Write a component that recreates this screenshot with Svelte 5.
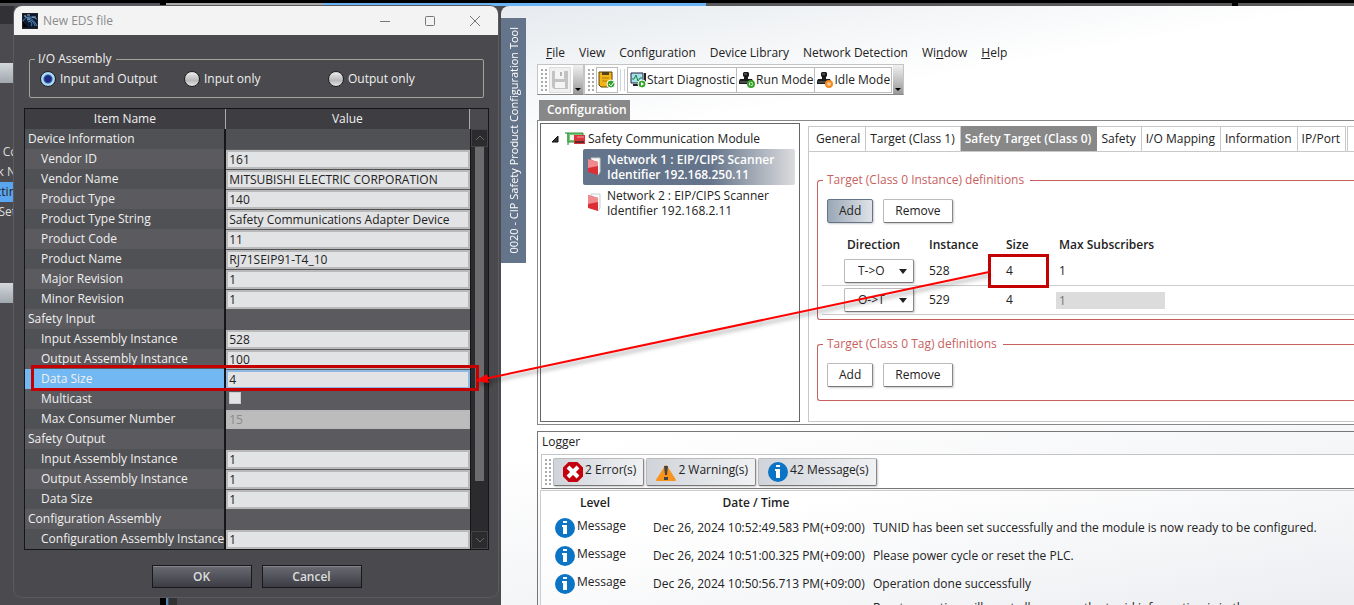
<script>
  // parameters shown in the EDS dialog
  const rows = [
    { name: 'Device Information', group: true },
    { name: 'Vendor ID', value: '161' },
    { name: 'Vendor Name', value: 'MITSUBISHI ELECTRIC CORPORATION' },
    { name: 'Product Type', value: '140' },
    { name: 'Product Type String', value: 'Safety Communications Adapter Device' },
    { name: 'Product Code', value: '11' },
    { name: 'Product Name', value: 'RJ71SEIP91-T4_10' },
    { name: 'Major Revision', value: '1' },
    { name: 'Minor Revision', value: '1' },
    { name: 'Safety Input', group: true },
    { name: 'Input Assembly Instance', value: '528' },
    { name: 'Output Assembly Instance', value: '100' },
    { name: 'Data Size', value: '4', selected: true },
    { name: 'Multicast', check: true },
    { name: 'Max Consumer Number', value: '15', disabled: true },
    { name: 'Safety Output', group: true },
    { name: 'Input Assembly Instance', value: '1' },
    { name: 'Output Assembly Instance', value: '1' },
    { name: 'Data Size', value: '1' },
    { name: 'Configuration Assembly', group: true },
    { name: 'Configuration Assembly Instance', value: '1' }
  ];

  const menus = ['File', 'View', 'Configuration', 'Device Library', 'Network Detection', 'Window', 'Help'];
  const tabs = ['General', 'Target (Class 1)', 'Safety Target (Class 0)', 'Safety', 'I/O Mapping', 'Information', 'IP/Port'];
  const networks = [
    { name: 'Network 1 : EIP/CIPS Scanner', id: 'Identifier 192.168.250.11' },
    { name: 'Network 2 : EIP/CIPS Scanner', id: 'Identifier 192.168.2.11' }
  ];
  const logs = [
    { time: 'Dec 26, 2024 10:52:49.583 PM(+09:00)', text: 'TUNID has been set successfully and the module is now ready to be configured.' },
    { time: 'Dec 26, 2024 10:51:00.325 PM(+09:00)', text: 'Please power cycle or reset the PLC.' },
    { time: 'Dec 26, 2024 10:50:56.713 PM(+09:00)', text: 'Operation done successfully' }
  ];

  let assembly = $state('both');
  let activeTab = $state('Safety Target (Class 0)');
  let activeNetwork = $state(0);
</script>

{#snippet infoIcon()}
  <svg class="levelIcon" viewBox="0 0 20 20" aria-hidden="true">
    <circle cx="10" cy="10" r="10" fill="#0b74c4" />
    <path d="M8 3h4v2H8zM7 7h5v9H8V9H7z" fill="#fff" />
  </svg>
{/snippet}

{#snippet stamp(idle)}
  <svg width="18" height="18" viewBox="0 0 18 18" aria-hidden="true">
    <path d="M5 2l1-1h4l1 1v3l-1 1v2h4l1 2v3H1v-3l1-2h4V6L5 5z" fill="#1c1c1c" />
    <path d="M2 11h12M6 3h3" stroke="#777" />
    <circle cx="13" cy="13" r="3" fill="#fff" stroke={idle ? '#f58a1f' : '#36a32b'} stroke-width="2" />
    {#if idle}
      <path d="M12 11v4M14 11v4" stroke="#f58a1f" />
    {:else}
      <path d="M12 11l3 2-3 2z" fill="#36a32b" />
    {/if}
  </svg>
{/snippet}

<div class="desktop">
  <div class="behindTop"><span class="grayPart"></span><span class="bluePart"></span><span class="darkPart"></span><span class="endPart"></span></div>
  <div class="behindLeft" aria-hidden="true">
    <span class="bar"></span>
    <div class="peek">
      <span>Cc</span>
      <span>k N</span>
      <span class="hit">ctin</span>
      <span>Set</span>
    </div>
    <span class="bar"></span>
  </div>
  <div class="behindBottom"></div>

  <section class="dialog" aria-label="New EDS file">
    <header class="titleBar">
      <svg width="16" height="16" viewBox="0 0 16 16" aria-hidden="true">
        <rect x=".5" y=".5" width="15" height="15" fill="#0c1830" stroke="#222" />
        <path d="M1 8c3-5 8-5 14-2M3 4c5 0 9 3 12 9M6 9c3-2 5 2 3 4M5 7c4-1 7 2 8 6" fill="none" stroke="#4f8fc4" />
        <path d="M2 3h2M5 2h3M10 4h4M5 6h3" stroke="#a8bccb" />
        <path d="M1 9l5 5H1z" fill="#000" />
      </svg>
      <h1>New EDS file</h1>
      <button aria-label="Minimize"><svg width="12" height="12" viewBox="0 0 12 12"><path d="M1 6.5h10" /></svg></button>
      <button aria-label="Maximize"><svg width="12" height="12" viewBox="0 0 12 12"><rect x="1.5" y="1.5" width="9" height="9" rx="1" /></svg></button>
      <button aria-label="Close"><svg width="12" height="12" viewBox="0 0 12 12"><path d="M1 1l10 10M11 1L1 11" /></svg></button>
    </header>

    <div class="dialogBody">
      <fieldset class="assembly">
        <legend>I/O Assembly</legend>
        <label><input type="radio" bind:group={assembly} value="both" />Input and Output</label>
        <label><input type="radio" bind:group={assembly} value="in" />Input only</label>
        <label><input type="radio" bind:group={assembly} value="out" />Output only</label>
      </fieldset>

      <div class="gridBox">
        <table class="params">
          <thead>
            <tr><th class="nameCol">Item Name</th><th>Value</th></tr>
          </thead>
          <tbody>
            {#each rows as row, i}
              <tr class:selected={row.selected}>
                <td class:group={row.group}><label for="param{i}">{row.name}</label></td>
                <td class="value">
                  {#if row.check}
                    <input type="checkbox" id="param{i}" />
                  {:else if !row.group}
                    <input type="text" id="param{i}" value={row.value} disabled={row.disabled} />
                  {/if}
                </td>
              </tr>
            {/each}
          </tbody>
        </table>
        <div class="scroll">
          <button aria-label="Scroll up"><svg width="10" height="6" viewBox="0 0 10 6"><path d="M1 5l4-4 4 4" /></svg></button>
          <div class="track"><div class="thumb"></div></div>
          <button aria-label="Scroll down"><svg width="10" height="6" viewBox="0 0 10 6"><path d="M1 1l4 4 4-4" /></svg></button>
        </div>
      </div>

      <div class="actions">
        <button>OK</button>
        <button>Cancel</button>
      </div>
    </div>
  </section>

  <main class="tool">
    <div class="sideTitle"><span>0020 - CIP Safety Product Configuration Tool</span></div>

    <div class="work">
      <nav class="menu">
        {#each menus as item}
          {#if item === 'Window'}
            <button>Wi<u>n</u>dow</button>
          {:else if item === 'File' || item === 'Help'}
            <button><u>{item[0]}</u>{item.slice(1)}</button>
          {:else}
            <button>{item}</button>
          {/if}
        {/each}
      </nav>

      <div class="toolbars">
        <div class="toolbar">
          <span class="grip"></span>
          <button class="save" aria-label="Save" disabled>
            <svg width="18" height="20" viewBox="0 0 18 20"><path d="M1 1h16v18H3l-2-2z" fill="#c3c3c3" /><path d="M4 1h9v8H4zM4 12h10v6H4z" fill="#f4f4f4" /><path d="M9 2h2v4H9z" fill="#b5b5b5" /></svg>
          </button>
          <button class="more" aria-label="More file tools"></button>
        </div>
        <div class="toolbar">
          <span class="grip"></span>
          <button class="tile" aria-label="Verify">
            <svg width="18" height="18" viewBox="0 0 18 18">
              <path d="M1 1h13v15H3l-2-2z" fill="#f2b41b" stroke="#5b4300" />
              <path d="M4 1h7v3H4z" fill="#54441c" />
              <path d="M4 7h7M4 10h5" stroke="#b07a00" />
              <circle cx="13" cy="13" r="4" fill="#36a32b" stroke="#fff" />
              <path d="M11 13l2 2 3-4" fill="none" stroke="#fff" />
            </svg>
          </button>
          <span class="sep"></span>
          <button class="toolBtn">
            <svg width="18" height="18" viewBox="0 0 18 18" aria-hidden="true">
              <path d="M2 2h12v10H2z" fill="#a6e0ee" stroke="#223" />
              <path d="M16 2v12H4" fill="none" stroke="#223" stroke-width="2" />
              <path d="M3 8h2l2-4 2 6 2-3h2" fill="none" stroke="#158533" />
              <circle cx="13" cy="13" r="4" fill="#36a32b" stroke="#fff" />
              <path d="M12 11l3 2-3 2z" fill="#fff" />
            </svg>Start Diagnostic</button>
          <button class="toolBtn">{@render stamp(false)}Run Mode</button>
          <button class="toolBtn">{@render stamp(true)}Idle Mode</button>
          <button class="more last" aria-label="More tools"></button>
        </div>
      </div>

      <h2 class="paneTab">Configuration</h2>
      <div class="config">
        <div class="tree">
          <div class="root">
            <svg width="8" height="8" viewBox="0 0 8 8" aria-hidden="true"><path d="M7 1v6H1z" fill="#333" stroke="#111" /></svg>
            <svg width="20" height="14" viewBox="0 0 20 14" aria-hidden="true">
              <path d="M0 1h3v12" stroke="#158533" fill="none" />
              <path d="M3 1h15v9H3z" fill="#7cc676" stroke="#2f8f35" />
              <path d="M5 3h5v5H5z" fill="#eef5ee" />
              <path d="M9 3h11v9H9z" fill="#d9333b" />
              <path d="M10 9h9v2h-9z" fill="#5c2a2d" />
              <path d="M12 5h7" stroke="#f2a5a8" />
            </svg>
            Safety Communication Module
          </div>
          {#each networks as net, i}
            <button class="node" class:active={activeNetwork === i} onclick={() => (activeNetwork = i)}>
              <svg width="14" height="20" viewBox="0 0 14 20" aria-hidden="true">
                <path d="M4 1h9v14l-2 3z" fill="#fafafa" stroke="#ccc" />
                <path d="M1 2l10 3v13L1 15z" fill="#dc2f35" />
                <path d="M1 2l10 3v4L1 11z" fill="#ef8b8e" />
              </svg>
              <span>{net.name}<br />{net.id}</span>
            </button>
          {/each}
        </div>

        <div class="detail">
          <div class="tabs">
            {#each tabs as tab}
              <button class:active={activeTab === tab} onclick={() => (activeTab = tab)}>{tab}</button>
            {/each}
            <span class="nextTab"></span>
          </div>
          <div class="tabBody">
            <fieldset class="defs">
              <legend>Target (Class 0 Instance) definitions</legend>
              <div class="btns"><button class="focused">Add</button><button>Remove</button></div>
              <table class="instances">
                <thead>
                  <tr><th class="dir">Direction</th><th class="inst">Instance</th><th class="size">Size</th><th>Max Subscribers</th></tr>
                </thead>
                <tbody>
                  <tr>
                    <td class="dir"><span class="pick"><select aria-label="Direction of instance 528"><option>T-&gt;O</option><option>O-&gt;T</option></select><i></i></span></td>
                    <td>528</td><td>4</td><td>1</td>
                  </tr>
                  <tr>
                    <td class="dir"><span class="pick"><select aria-label="Direction of instance 529"><option>O-&gt;T</option><option>T-&gt;O</option></select><i></i></span></td>
                    <td>529</td><td>4</td><td class="sub"><input type="text" value="1" disabled aria-label="Max Subscribers of instance 529" /></td>
                  </tr>
                </tbody>
              </table>
            </fieldset>
            <fieldset class="defs tags">
              <legend>Target (Class 0 Tag) definitions</legend>
              <div class="btns"><button>Add</button><button>Remove</button></div>
            </fieldset>
          </div>
        </div>
      </div>

      <section class="logger">
        <h2>Logger</h2>
        <div class="filters">
          <span class="grip"></span>
          <button>
            <svg class="levelIcon" viewBox="0 0 20 20" aria-hidden="true"><path d="M6 1h8l5 5v8l-5 5H6l-5-5V6z" fill="#c4000c" stroke="#c4000c" stroke-width="2" stroke-linejoin="round" /><path d="M5 5l10 10M15 5L5 15" stroke="#fff" stroke-width="4" /></svg>
            2 Error(s)</button>
          <button>
            <svg class="levelIcon" viewBox="0 0 20 20" aria-hidden="true"><path d="M10 4l9 14H1z" fill="#f7941d" stroke="#f7941d" stroke-width="2" stroke-linejoin="round" /><path d="M8 4h4l-1 9H9zM8 15h4v3H8z" fill="#444" /></svg>
            2 Warning(s)</button>
          <button>{@render infoIcon()} 42 Message(s)</button>
        </div>
        <div class="logList">
          <table>
            <thead><tr><th class="level">Level</th><th class="time">Date / Time</th><th></th></tr></thead>
            <tbody>
              {#each logs as log}
                <tr><td><span class="msg">{@render infoIcon()}<span>Message</span></span></td><td>{log.time}</td><td>{log.text}</td></tr>
              {/each}
              <tr class="tall"><td></td><td></td><td>Reset operation will reset all memory the tunid information is in the</td></tr>
            </tbody>
          </table>
        </div>
      </section>
    </div>
  </main>

  <!-- callout linking the two size fields -->
  <div class="mark markData"></div>
  <div class="mark markSize"></div>
  <svg class="arrow" aria-hidden="true">
    <path d="M989 272L484 379" stroke="#f00" stroke-width="2" />
    <path d="M475 381l12-7 2 9z" fill="#f00" />
  </svg>
</div>

<style>
  :global(body) {
    margin: 0;
    overflow: hidden;
  }

  .desktop {
    position: relative;
    height: 100vh;
    overflow: hidden;
    background: #4b4a4e;
    font-family: "Open Sans", "Noto Sans", sans-serif;
    font-size: 12px;
    line-height: 16px;
    color: #222;
  }

  .desktop button,
  .desktop input,
  .desktop select {
    font: inherit;
    color: inherit;
    margin: 0;
    padding: 0;
    box-sizing: border-box;
  }

  h1, h2 {
    margin: 0;
    font-size: 12px;
    font-weight: 400;
  }

  fieldset {
    margin: 0;
    min-width: 0;
  }

  table {
    border-collapse: collapse;
  }

  /* windows lying behind */
  .behindTop {
    display: flex;
    height: 3px;
    border-top: 3px solid #000;
    background: #555458;
    padding-left: 166px;
  }
  .grayPart { width: 157px; background: #aaa9a9; box-shadow: -6px 0 0 #000; }
  .bluePart { width: 383px; background: #6ab3f5; }
  .darkPart { width: 526px; background: #59585b; }
  .endPart { flex: 1; background: #59585b; border-left: 6px solid #000; }

  .behindLeft {
    position: absolute;
    top: 6px;
    left: 0;
    width: 14px;
    color: #ddd;
    border-top: 18px solid #323236;
  }
  .bar {
    display: block;
    height: 20px;
    margin-top: 39px;
    background: linear-gradient(#d4d8dc, #a0a7ae);
  }
  .peek {
    margin: 59px 0 61px;
    height: 80px;
  }
  .peek span {
    display: flex;
    justify-content: flex-end;
    height: 20px;
    line-height: 20px;
    width: 16px;
    overflow: hidden;
    white-space: nowrap;
  }
  .peek .hit {
    background: #5aa5f0;
    color: #222;
  }
  .bar + .peek + .bar { margin-top: 0; }
  .behindBottom {
    position: absolute;
    left: 160px;
    bottom: 0;
    width: 6px;
    height: 9px;
    background: #000;
    border-right: 2px solid #4f86b8;
    box-shadow: 9px 0 0 #333;
  }

  /* dialog */
  .dialog {
    position: absolute;
    top: 6px;
    left: 14px;
    width: 484px;
    background: #4a494d;
    border-radius: 8px;
    overflow: hidden;
    color: #f0f0f0;
    box-shadow: 0 0 0 1px #5b5a5e;
  }
  .titleBar {
    display: flex;
    align-items: center;
    height: 29px;
    padding: 0 17px 0 8px;
    background: #f3f3f3;
    color: #8b8b8b;
  }
  .titleBar h1 {
    flex: 1;
    padding-left: 5px;
  }
  .titleBar button {
    display: flex;
    background: none;
    border: 0;
  }
  .desktop .titleBar button { margin-left: 33px; }
  .titleBar button svg {
    fill: none;
    stroke: #777;
  }
  .dialogBody {
    padding: 16px 9px 9px 10px;
  }
  .assembly {
    display: flex;
    margin: 0 5px 10px;
    height: 47px;
    box-sizing: border-box;
    border: 1px solid #a3a397;
    border-radius: 2px;
    padding: 0 10px;
  }
  .assembly legend {
    padding: 0 5px 0 3px;
    margin-left: -5px;
  }
  .assembly label {
    display: flex;
    align-items: center;
    gap: 4px;
    width: 144px;
    height: 24px;
  }
  .assembly input {
    appearance: none;
    width: 16px;
    height: 16px;
    border-radius: 50%;
    border: 1px solid #222;
    background: linear-gradient(#eee, #b8b8b8 60%, #e4e4e4);
  }
  .assembly input:checked {
    background: radial-gradient(#1d2c7d 0 3px, #3a5cae 4px, #a6d7f7 5px);
  }

  .gridBox {
    display: flex;
    border: 1px solid #161618;
    background: #4a4a4e;
  }
  .params {
    flex: 1;
    table-layout: fixed;
  }
  .params th {
    height: 20px;
    padding: 0;
    font-weight: 400;
    background: #3d3d42;
    border-right: 1px solid #aaa;
  }
  .nameCol { width: 199px; }
  .params td {
    height: 20px;
    padding: 0 0 0 16px;
    background: #505154;
    white-space: nowrap;
  }
  .params tr:nth-child(even) td { background: #5b5b5f; }
  .params tr:nth-child(n + 10) td.value { background: #5b5b5f; }
  .params td.group { padding-left: 3px; }
  .params td.value {
    padding: 0;
    border-left: 2px solid #161618;
    line-height: 0;
  }
  .params .selected td:first-child { background: #72b8f2; }
  .params input {
    width: 100%;
    height: 19px;
    border: 2px solid #b9b9b9;
    background: #e2e3e5;
  }
  .desktop .params input {
    color: #222;
    padding-left: 1px;
  }
  .params .selected input { border-color: #8fb9e2; }
  .desktop .params input:disabled {
    background: #bcbcbc;
    color: #8b8b8b;
  }
  .params input[type="checkbox"] {
    appearance: none;
    width: 12px;
    height: 12px;
    border: 1px solid #ccc;
  }
  .desktop .params input[type="checkbox"] { margin: 0 0 3px 3px; }
  .scroll {
    display: flex;
    flex-direction: column;
    width: 17px;
    margin-top: 20px;
    background: #2b2b2e;
    border-left: 1px solid #161618;
  }
  .scroll button {
    display: grid;
    place-items: center;
    height: 18px;
    background: #2b2b2e;
    border: 1px solid #444;
  }
  .scroll svg {
    fill: none;
    stroke: #666;
  }
  .track { flex: 1; }
  .thumb {
    width: 9px;
    height: 87%;
    margin: 0 4px;
    background: #6c6c6e;
  }
  .actions {
    display: flex;
    justify-content: center;
    gap: 10px;
    padding-top: 15px;
  }
  .actions button {
    width: 100px;
    height: 23px;
    border: 1px solid #18181a;
    background: linear-gradient(#6a6a72, #3c3c45);
    box-shadow: inset 0 1px 0 #85858d;
  }
  .desktop .actions button {
    font-weight: 600;
    color: #ddd;
  }

  /* configuration tool */
  .tool {
    position: absolute;
    top: 6px;
    left: 501px;
    right: 0;
    bottom: 0;
    display: flex;
    border-top-left-radius: 8px;
    overflow: hidden;
    background: linear-gradient(170deg, #e6eaee 0, #fff 20%, #fff 60%, #e9ebef 100%);
  }
  .sideTitle {
    width: 25px;
    height: 245px;
    margin-top: 12px;
    background: #64748a;
    color: #fff;
    font-size: 11px;
    display: grid;
    place-items: center;
  }
  .sideTitle span {
    writing-mode: vertical-rl;
    transform: rotate(180deg);
    white-space: nowrap;
  }
  .work {
    flex: 1;
    min-width: 0;
    display: flex;
    flex-direction: column;
    padding: 38px 0 0 11px;
  }
  .menu {
    display: flex;
    gap: 14px;
    padding: 1px 9px 3px;
  }
  .menu button {
    border: 0;
    background: none;
    white-space: nowrap;
  }
  .toolbars {
    display: flex;
    margin-bottom: 5px;
  }
  .toolbar {
    display: flex;
    align-items: center;
    height: 31px;
    box-sizing: border-box;
    border: 1px solid #c4c4c4;
    border-bottom-color: #888;
    background: #fdfdfd;
  }
  .grip {
    width: 7px;
    height: 24px;
    margin: 0 2px;
    background: radial-gradient(circle, #aaa 1px, transparent 1px) 0 0 / 4px 4px;
  }
  .tile, .save {
    display: grid;
    place-items: center;
    width: 22px;
    height: 26px;
    border: 1px solid #bbb;
    background: #fff;
  }
  .save {
    border-color: #ddd;
    background: #f0f0f0;
  }
  .more {
    width: 10px;
    height: 29px;
    border: 0;
    display: flex;
    align-items: flex-end;
    justify-content: center;
    background: linear-gradient(#f0f0f0, #999);
  }
  .desktop .more { margin-left: 2px; }
  .desktop .more.last { margin-left: 1px; }
  .more::after {
    content: "";
    border: 3px solid transparent;
    border-top-color: #000;
    border-bottom: 0;
    margin-bottom: 3px;
  }
  .sep {
    width: 3px;
    height: 22px;
    margin: 0 2px;
    border: 1px solid #ccd3dc;
    border-width: 0 1px;
  }
  .toolBtn {
    display: flex;
    align-items: center;
    height: 26px;
    border: 1px solid #bbb;
    background: #fff;
    white-space: nowrap;
  }
  .desktop .toolBtn { padding: 0 1px; }
  .toolBtn + .toolBtn { border-left: 0; }

  .paneTab {
    align-self: flex-start;
    margin-left: 2px;
    padding: 2px 3px 2px 8px;
    background: #888;
    color: #fff;
    font-weight: 600;
  }
  .config {
    display: flex;
    gap: 8px;
    height: 305px;
    box-sizing: border-box;
    border: 1px solid #888;
    border-right: 0;
    padding: 2px 0 2px 2px;
    background: #fff;
  }
  .tree {
    width: 260px;
    flex: none;
    box-sizing: border-box;
    border: 1px solid #666;
    padding: 7px 4px 0 10px;
  }
  .root {
    display: flex;
    align-items: center;
    gap: 3px;
  }
  .root svg:first-child { margin-right: 3px; }
  .node {
    display: flex;
    align-items: center;
    gap: 6px;
    width: 212px;
    height: 36px;
    border: 0;
    background: none;
    text-align: left;
    white-space: nowrap;
  }
  .desktop .node {
    margin: 2px 0 0 32px;
    padding: 0 4px;
    line-height: 15px;
  }
  .desktop .node + .node { margin-top: 0; }
  .desktop .node.active {
    border-radius: 2px;
    background: linear-gradient(90deg, #64748a 60%, #dcdcde);
    color: #fff;
    font-weight: 600;
  }
  .detail {
    flex: 1;
    min-width: 0;
    display: flex;
    flex-direction: column;
    padding-top: 3px;
  }
  .tabs {
    display: flex;
  }
  .tabs button {
    height: 25px;
    border: 1px solid #c8c8c8;
    border-bottom: 0;
    background: #fff;
    white-space: nowrap;
  }
  .desktop .tabs button { padding: 0 5px 0 4px; }
  .desktop .tabs button:first-child { padding-left: 7px; }
  .tabs button + button { border-left: 0; }
  .desktop .tabs .active {
    background: #888;
    border-color: #888;
    color: #fff;
    font-weight: 600;
  }
  .nextTab {
    flex: 1;
    margin-left: 1px;
    border: 1px solid #c8c8c8;
    border-width: 1px 0 0 1px;
  }
  .tabBody {
    flex: 1;
    border: 1px solid #c8c8c8;
    border-right: 0;
    padding: 20px 0 0 8px;
  }
  .defs {
    border: 1px solid #c85f5f;
    border-right: 0;
    border-radius: 3px 0 0 3px;
    padding: 11px 0 4px 4px;
  }
  .defs legend {
    margin-left: 1px;
    padding: 0 6px 0 4px;
    color: #c85f5f;
  }
  .defs.tags {
    margin-top: 16px;
    padding-bottom: 13px;
  }
  .btns {
    display: flex;
    gap: 10px;
    padding-left: 5px;
  }
  .btns button, .pick select {
    height: 24px;
    border: 1px solid #bbb;
    border-right-color: #888;
    border-bottom-color: #777;
    border-radius: 2px;
    background: #fff;
    box-shadow: 1px 1px 2px #ccc;
  }
  .desktop .btns button { padding: 0 11px; }
  .desktop .btns .focused {
    border-color: #64748a;
    background: linear-gradient(90deg, #9aa7b6, #dfe3e8);
  }
  .instances {
    width: 100%;
    table-layout: fixed;
    margin-top: 10px;
  }
  .instances th {
    height: 24px;
    padding: 0;
    text-align: left;
    font-weight: 600;
  }
  .instances td {
    height: 28px;
    padding: 0;
    border-bottom: 1px solid #ccc;
  }
  .instances th.dir { width: 82px; padding-left: 25px; }
  .instances td.dir { padding-left: 22px; }
  .instances .inst { width: 77px; }
  .instances .size { width: 53px; }
  .pick {
    display: grid;
    width: 70px;
    align-items: center;
  }
  .pick select {
    grid-area: 1 / 1;
    appearance: none;
    width: 70px;
  }
  .desktop .pick select { padding-left: 13px; }
  .pick i {
    grid-area: 1 / 1;
    justify-self: end;
    margin-right: 7px;
    border: 4px solid transparent;
    border-top: 5px solid #222;
    border-bottom: 0;
    pointer-events: none;
  }
  .sub input {
    display: block;
    width: 109px;
    height: 17px;
    border: 0;
    background: #dcdcdc;
  }
  .desktop .sub input {
    margin-left: -3px;
    padding-left: 3px;
    color: #777;
  }

  .logger {
    flex: 1;
    min-height: 0;
    margin-top: 6px;
    border: 1px solid #777;
    border-width: 1px 0 0 1px;
    padding-left: 2px;
  }
  .logger h2 {
    height: 22px;
    line-height: 20px;
    padding-left: 2px;
  }
  .filters {
    display: flex;
    align-items: center;
    height: 35px;
    box-sizing: border-box;
    margin-left: 1px;
    border: 1px solid #c4c4c4;
    border-bottom-color: #777;
    border-right: 0;
    background: #fff;
  }
  .filters .grip { height: 28px; }
  .filters button {
    display: flex;
    align-items: flex-start;
    gap: 2px;
    height: 28px;
    border: 1px solid #bbb;
    border-right-color: #888;
    border-bottom-color: #777;
    border-radius: 2px;
    background: linear-gradient(90deg, #d0d4da, #f0f1f3);
    box-shadow: 1px 1px 2px #ccc;
    white-space: nowrap;
  }
  .desktop .filters button {
    margin-right: 2px;
    padding: 3px 7px 0 9px;
  }
  .levelIcon {
    width: 20px;
    height: 20px;
    flex: none;
  }
  .logList {
    margin-top: 1px;
    border: 1px solid #ccc;
    border-width: 1px 0 0 1px;
    background: linear-gradient(170deg, #fff 20%, #e9ebef);
    height: 140px;
  }
  .logList table {
    table-layout: fixed;
    width: 100%;
  }
  .logList th {
    height: 23px;
    padding: 0;
    font-weight: 600;
  }
  .logList td {
    height: 28px;
    padding: 0;
    white-space: nowrap;
  }
  .logList .tall td {
    vertical-align: top;
    padding-top: 2px;
  }
  .level { width: 108px; }
  .time { width: 214px; }
  .logList td:nth-child(2) { padding-left: 4px; }
  .logList td:nth-child(3) { padding-left: 10px; }
  .msg {
    display: flex;
    gap: 2px;
    padding-left: 14px;
    align-items: flex-start;
  }

  /* callout */
  .mark {
    position: absolute;
    box-sizing: border-box;
    border: 3px solid #c40000;
  }
  .markData {
    left: 31px;
    top: 365px;
    width: 448px;
    height: 26px;
  }
  .markSize {
    left: 988px;
    top: 254px;
    width: 61px;
    height: 34px;
  }
  .arrow {
    position: absolute;
    inset: 0;
    width: 100%;
    height: 100%;
    pointer-events: none;
    filter: drop-shadow(2px 3px 2px rgba(0, 0, 0, 0.4));
  }
</style>
